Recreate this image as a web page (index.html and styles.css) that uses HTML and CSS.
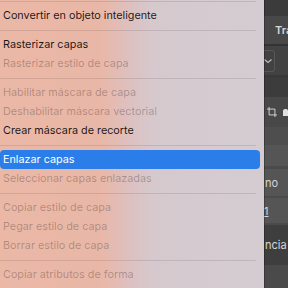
FILE: index.html
```html
<!DOCTYPE html>
<html lang="es">
<head>
<meta charset="utf-8">
<link rel="stylesheet" href="styles.css">
</head>
<body>
<div class="screen">
  <div class="menu">
    <div class="sep"></div>
    <div class="item">Convertir en objeto inteligente</div>
    <div class="sep"></div>
    <div class="item">Rasterizar capas</div>
    <div class="item off">Rasterizar estilo de capa</div>
    <div class="sep"></div>
    <div class="item off">Habilitar máscara de capa</div>
    <div class="item off">Deshabilitar máscara vectorial</div>
    <div class="item">Crear máscara de recorte</div>
    <div class="sep"></div>
    <div class="item active">Enlazar capas</div>
    <div class="item off">Seleccionar capas enlazadas</div>
    <div class="sep"></div>
    <div class="item off">Copiar estilo de capa</div>
    <div class="item off">Pegar estilo de capa</div>
    <div class="item off">Borrar estilo de capa</div>
    <div class="sep"></div>
    <div class="item off">Copiar atributos de forma</div>
  </div>
  <div class="panel">
    <div class="p-row p-top"></div>
    <div class="p-row p-tabs"><span class="p-text">Tra</span></div>
    <div class="p-row p-select"><span class="p-box"><svg width="8" height="6" viewBox="0 0 8 6"><path d="M0.5 1.5 L4 4.5 L7.5 1.5" fill="none" stroke="#bdbdbd" stroke-width="1.2"/></svg></span></div>
    <div class="p-row p-gap"></div>
    <div class="p-row p-icons">
      <svg class="p-crop" width="12" height="12" viewBox="0 0 12 12"><path d="M2.5 0 V9.5 H12 M0 2.5 H9.5 V12" fill="none" stroke="#cfcfcf" stroke-width="1.2"/></svg>
      <span class="p-lock"></span>
    </div>
    <div class="p-row p-mid"></div>
    <div class="p-row p-a"></div>
    <div class="p-row p-b"><span class="p-text">no</span></div>
    <div class="p-row p-c"><span class="p-text p-u">1</span></div>
    <div class="p-row p-d"><span class="p-text">ncia</span></div>
    <div class="p-row p-e"></div>
  </div>
</div>
</body>
</html>
```
FILE: styles.css
```css
html, body {
  margin: 0;
  padding: 0;
  width: 288px;
  height: 288px;
  overflow: hidden;
  background: #3f3f3f;
}
.screen {
  display: flex;
  width: 288px;
  height: 288px;
  overflow: hidden;
}
.menu {
  width: 264px;
  flex: none;
  margin-top: -4px;
  padding-right: 4px;
  box-sizing: border-box;
  background: linear-gradient(to right, #ebb8a6 0%, #e9b7a7 38%, #dcc1c2 50%, #d6c9ce 58%, #d4ccd1 100%);
  font-family: "Inter", "Liberation Sans", sans-serif;
  font-size: 10.8px;
  box-shadow: 1px 0 0 rgba(0,0,0,0.25);
  position: relative;
  z-index: 1;
}
.item {
  height: 19px;
  line-height: 19px;
  padding-left: 3px;
  color: rgba(0,0,0,0.88);
  white-space: nowrap;
  border-radius: 4px;
}
.item.off {
  color: rgba(0,0,0,0.26);
}
.item.active {
  background: #2b7de9;
  color: #fff;
}
.sep {
  height: 10px;
  box-sizing: border-box;
  padding-top: 5px;
  margin-right: 4px;
}
.sep::before {
  content: "";
  display: block;
  height: 1px;
  background: rgba(0,0,0,0.1);
}
.panel {
  flex: 1;
  display: flex;
  flex-direction: column;
  font-family: "Inter", "Liberation Sans", sans-serif;
  font-size: 11px;
  color: #d6d6d6;
  overflow: hidden;
}
.p-row {
  display: flex;
  align-items: center;
  flex: none;
  white-space: nowrap;
}
.p-text { padding-left: 1px; }
.p-top { height: 16px; background: #3b3b3b; }
.p-tabs { height: 28px; background: #484848; padding-left: 10px; font-weight: 600; border-bottom: 2px solid #333; }
.p-select { height: 29px; background: #424242; }
.p-box {
  width: 10px; height: 20px;
  border: 1px solid #575757; border-left: none;
  border-radius: 0 3px 3px 0;
  display: flex; align-items: center; justify-content: flex-start;
}
.p-gap { height: 20px; background: #3c3c3c; border-top: 2px solid #383838; }
.p-icons { height: 30px; background: #484848; gap: 6px; padding-left: 3px; }
.p-lock { width: 6px; height: 7px; background: #e0e0e0; border-radius: 2px 2px 0 0; }
.p-mid { height: 18px; background: #4e4e4e; }
.p-a { height: 21px; background: #555555; border-bottom: 3px solid #4a4a4a; }
.p-b { height: 27px; background: #555555; }
.p-c { height: 25px; background: #555555; border-top: 2px solid #4b4b4b; border-bottom: 2px solid #4b4b4b;}
.p-u { text-decoration: underline; padding-left: 0; }
.p-d { height: 40px; background: #3e3e3e; }
.p-e { flex: 1; background: #4a4a4a; }
```
